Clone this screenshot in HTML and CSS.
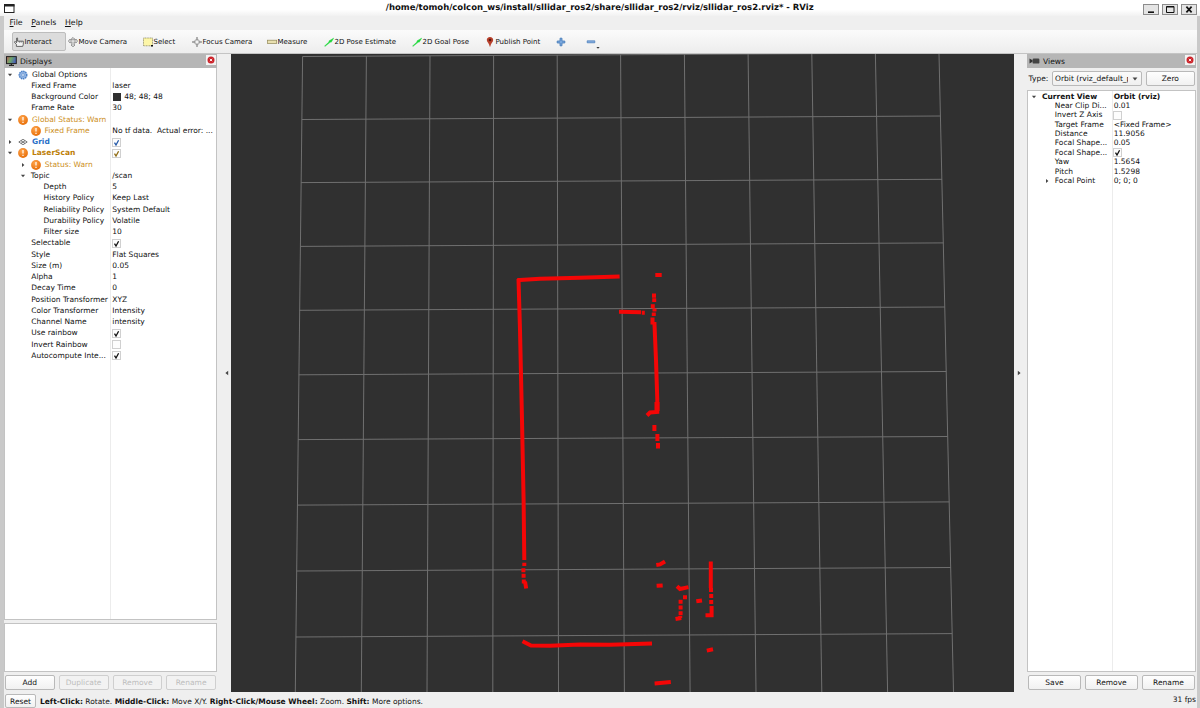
FILE: index.html
```
<!DOCTYPE html>
<html lang="en">
<head>
  <meta charset="UTF-8">
  <title>/home/tomoh/colcon_ws/install/sllidar_ros2/share/sllidar_ros2/rviz/sllidar_ros2.rviz* - RViz</title>
  <link rel="stylesheet" href="styles.css">
</head>
<body>
  <!-- shared icons -->
  <svg class="defs">
    <defs>
      <radialGradient id="orange" cx="40%" cy="30%" r="70%">
        <stop offset="0" stop-color="#ffa54d"/>
        <stop offset="1" stop-color="#e8700a"/>
      </radialGradient>
      <linearGradient id="screen" x1="0" y1="0" x2="1" y2="0.3">
        <stop offset="0" stop-color="#b85c5c"/>
        <stop offset="0.5" stop-color="#6fa96a"/>
        <stop offset="1" stop-color="#4b62b5"/>
      </linearGradient>
    </defs>
    <symbol id="warn" viewBox="0 0 10 10">
      <circle cx="5" cy="5" r="4.9" fill="url(#orange)"/>
      <path d="M5 2v3.6M5 6.7v1.3" stroke="#fff" stroke-width="1.2"/>
    </symbol>
    <symbol id="open" viewBox="0 0 6 6"><path d="M0.9 1.8h4.2L3 4.3z" fill="#444"/></symbol>
    <symbol id="shut" viewBox="0 0 6 6"><path d="M2 0.9v4.2L4.4 3z" fill="#444"/></symbol>
    <symbol id="tick" viewBox="0 0 8 8"><path d="M1.5 3.7L3 6L5.6 1.3" fill="none" stroke="currentColor" stroke-width="1.3"/></symbol>
    <symbol id="arrow" viewBox="0 0 10 10"><path d="M0.6 9L5.2 4.8L4.8 4.1L9.6 1.2L7.2 5.2L6.4 5.1L1.1 9.3z" fill="#1fd83a" stroke="#1fd83a" stroke-width="0.5"/></symbol>
    <symbol id="close" viewBox="0 0 10 10">
      <circle cx="5" cy="5" r="3.5" fill="#cc2229"/>
      <path d="M3.8 3.8l2.4 2.4M6.2 3.8L3.8 6.2" stroke="#fff" stroke-width="0.9"/>
    </symbol>
  </svg>

  <header class="titlebar">
    <svg class="app-icon" viewBox="0 0 11 9"><rect x="0.5" y="0.5" width="9.5" height="8" fill="#fff" stroke="#222"/><path d="M0 1.5h10.5" stroke="#222" stroke-width="2"/></svg>
    <h1>/home/tomoh/colcon_ws/install/sllidar_ros2/share/sllidar_ros2/rviz/sllidar_ros2.rviz* - RViz</h1>
    <div class="win-buttons">
      <span><svg viewBox="0 0 16 11"><path d="M5 8.2h6" stroke="#111" stroke-width="1.6"/></svg></span>
      <span><svg viewBox="0 0 16 11"><path d="M4.5 2.5h7.5v6h-7.5zM4.5 3h7.5" fill="none" stroke="#111"/></svg></span>
      <span><svg viewBox="0 0 16 11"><path d="M5.4 2.7l5.2 5.6M10.6 2.7L5.4 8.3" stroke="#111" stroke-width="1.7"/></svg></span>
    </div>
  </header>

  <div class="window">
    <nav class="menubar">
      <span><u>F</u>ile</span>
      <span><u>P</u>anels</span>
      <span><u>H</u>elp</span>
    </nav>

    <div class="toolbar">
      <div class="tool interact active">
        <svg viewBox="0 0 10 10"><path d="M2.4 9.4V7.3L0.7 5.6V4.7H1.6L2.6 5.7V1.1Q3.1 0.4 3.6 1.1V4.2H9.3V7.3L8.7 9.4z" fill="#f4f4f4" stroke="#444" stroke-width="0.8"/><path d="M5.4 4.2v1.6M7.2 4.2v1.6" stroke="#555" stroke-width="0.6"/></svg>Interact
      </div>
      <div class="tool move">
        <svg viewBox="0 0 10 10"><path d="M5 0.4L6.8 2.2H5.8V3H7.8V2L9.7 4.2L7.8 6V5H6.2V8H7L5 9.8L3 8H3.8V5H2.2V6L0.3 4.2L2.2 2V3H4.2V2.2H3.2z" fill="#ddd" stroke="#777" stroke-width="0.7"/></svg>Move Camera
      </div>
      <div class="tool select">
        <svg viewBox="0 0 10 10"><rect x="0.5" y="1" width="9" height="7.8" fill="#fdf6a8" stroke="#77744c" stroke-width="0.7" stroke-dasharray="1 0.6"/><path d="M8 8.1h2v1.3h-2z" fill="#111"/></svg>Select
      </div>
      <div class="tool focus">
        <svg viewBox="0 0 10 10"><circle cx="5" cy="5" r="2.5" fill="none" stroke="#8b8b8b" stroke-width="0.8"/><path d="M5 0v3.6M5 6.4V10M0 5h3.6M6.4 5H10" stroke="#888"/><path d="M5 0l1.2 1.6H3.8zM5 10l1.2-1.6H3.8zM0 5l1.6-1.2v2.4zM10 5L8.4 3.8v2.4z" fill="#999"/></svg>Focus Camera
      </div>
      <div class="tool measure">
        <svg viewBox="0 0 10 10"><rect x="0.3" y="3.2" width="9.4" height="3.2" fill="#e9e0b0" stroke="#8f8555" stroke-width="0.7"/></svg>Measure
      </div>
      <div class="tool pose"><svg><use href="#arrow"/></svg>2D Pose Estimate</div>
      <div class="tool goal"><svg><use href="#arrow"/></svg>2D Goal Pose</div>
      <div class="tool publish">
        <svg viewBox="0 0 10 10"><path d="M5 0.1C3 0.1 1.8 1.5 1.8 3.1C1.8 5 4.2 6.6 4.8 9.8H5.2C5.8 6.6 8.2 5 8.2 3.1C8.2 1.5 7 0.1 5 0.1z" fill="#b8412c"/><circle cx="5" cy="3" r="1.3" fill="#5d160d"/></svg>Publish Point
      </div>
      <div class="tool plus"><svg viewBox="0 0 10 10"><path d="M4 1.2h2V4h2.8v2H6v2.8H4V6H1.2V4H4z" fill="#7ba7dc" stroke="#4378b8" stroke-width="0.8"/></svg></div>
      <div class="tool minus"><svg viewBox="0 0 10 10"><path d="M1.2 3.8h7.6v2H1.2z" fill="#86aee0" stroke="#4378b8" stroke-width="0.7"/></svg><svg class="drop" viewBox="0 0 6 6"><path d="M1.4 2h3.2L3 3.7z" fill="#333"/></svg></div>
    </div>

    <main class="main">
      <section class="dock displays">
        <div class="dock-title">
          <svg class="dock-icon" viewBox="0 0 11 10"><rect x="0.5" y="0.6" width="9.8" height="7" fill="url(#screen)" stroke="#222"/><path d="M3 9.3h5M5.4 7.6v1.6" stroke="#222" stroke-width="1.2"/></svg>
          Displays
          <span class="dock-close"><svg><use href="#close"/></svg></span>
        </div>
        <div class="tree">
          <div class="row d0"><div class="name"><svg class="tw"><use href="#open"/></svg><svg class="ic" viewBox="0 0 10 10"><circle cx="5" cy="5" r="3.8" fill="#8eb2e2" stroke="#4a7fc5" stroke-width="1.4" stroke-dasharray="1.5 0.7"/><circle cx="5" cy="5" r="1.3" fill="#e4eefa" stroke="#4a7fc5" stroke-width="0.5"/></svg>Global Options</div></div>
          <div class="row d1"><div class="name">Fixed Frame</div><div class="value">laser</div></div>
          <div class="row d1"><div class="name">Background Color</div><div class="value"><i class="swatch"></i>48; 48; 48</div></div>
          <div class="row d1"><div class="name">Frame Rate</div><div class="value">30</div></div>
          <div class="row d0"><div class="name warn"><svg class="tw"><use href="#open"/></svg><svg class="ic"><use href="#warn"/></svg>Global Status: Warn</div></div>
          <div class="row d1i"><div class="name warn"><svg class="ic"><use href="#warn"/></svg>Fixed Frame</div><div class="value">No tf data.&nbsp; Actual error: ...</div></div>
          <div class="row d0"><div class="name grid"><svg class="tw"><use href="#shut"/></svg><svg class="ic" viewBox="0 0 10 10"><path d="M0.8 5L5 2.3L9.2 5L5 7.7zM2.9 3.7L7.1 6.4M7.1 3.7L2.9 6.4" fill="none" stroke="#555" stroke-width="0.8"/></svg>Grid</div><div class="value"><span class="check blue"><svg><use href="#tick"/></svg></span></div></div>
          <div class="row d0"><div class="name warn bold"><svg class="tw"><use href="#open"/></svg><svg class="ic"><use href="#warn"/></svg>LaserScan</div><div class="value"><span class="check gold"><svg><use href="#tick"/></svg></span></div></div>
          <div class="row d1t"><div class="name warn"><svg class="tw"><use href="#shut"/></svg><svg class="ic"><use href="#warn"/></svg>Status: Warn</div></div>
          <div class="row d1t"><div class="name"><svg class="tw"><use href="#open"/></svg>Topic</div><div class="value">/scan</div></div>
          <div class="row d2"><div class="name">Depth</div><div class="value">5</div></div>
          <div class="row d2"><div class="name">History Policy</div><div class="value">Keep Last</div></div>
          <div class="row d2"><div class="name">Reliability Policy</div><div class="value">System Default</div></div>
          <div class="row d2"><div class="name">Durability Policy</div><div class="value">Volatile</div></div>
          <div class="row d2"><div class="name">Filter size</div><div class="value">10</div></div>
          <div class="row d1"><div class="name">Selectable</div><div class="value"><span class="check"><svg><use href="#tick"/></svg></span></div></div>
          <div class="row d1"><div class="name">Style</div><div class="value">Flat Squares</div></div>
          <div class="row d1"><div class="name">Size (m)</div><div class="value">0.05</div></div>
          <div class="row d1"><div class="name">Alpha</div><div class="value">1</div></div>
          <div class="row d1"><div class="name">Decay Time</div><div class="value">0</div></div>
          <div class="row d1"><div class="name">Position Transformer</div><div class="value">XYZ</div></div>
          <div class="row d1"><div class="name">Color Transformer</div><div class="value">Intensity</div></div>
          <div class="row d1"><div class="name">Channel Name</div><div class="value">intensity</div></div>
          <div class="row d1"><div class="name">Use rainbow</div><div class="value"><span class="check"><svg><use href="#tick"/></svg></span></div></div>
          <div class="row d1"><div class="name">Invert Rainbow</div><div class="value"><span class="check"></span></div></div>
          <div class="row d1"><div class="name">Autocompute Inte...</div><div class="value"><span class="check"><svg><use href="#tick"/></svg></span></div></div>
        </div>
        <div class="help-box"></div>
        <div class="buttons">
          <button>Add</button>
          <button disabled>Duplicate</button>
          <button disabled>Remove</button>
          <button disabled>Rename</button>
        </div>
      </section>

      <div class="splitter left"><svg viewBox="0 0 6 6"><path d="M4.2 0.8v4.4L1.4 3z" fill="#444"/></svg></div>

      <svg class="viewport" viewBox="231 54 783 638">
        <!-- ground grid -->
        <g class="grid-lines">
          <path d="M302.6 56.5L939 53M301.9 119.5L940.6 116M301.1 182.6L942 179.3M300.2 246.4L943.5 242.9M299.5 310.3L944.9 307M298.8 374.8L946.3 371.5M298.1 439.6L947.8 436.5M297.4 505.1L949.3 501.9M296.6 571L950.7 567.5M295.9 637L952.2 633.6"/>
          <path d="M302.6 56.5L295.3 692M366.4 56.1L361.3 692M430 55.8L427 692M493.6 55.5L492.8 692M557.2 55.1L558.5 692M620.6 54.8L624.4 692M684.4 54L690.1 692M748.1 54L756 692M811.8 54L821.8 692M875.4 54L887.6 692M939 54L953.5 692"/>
        </g>
        <!-- laser returns -->
        <g class="scan">
          <path d="M517.2 280H520L540 278.8L580 277.8L619.6 276.5"/>
          <path d="M518.5 279L520 330L522 420L523.6 500L524.3 560"/>
          <path d="M654.4 322L656 360L657.3 400V412L650 412.5L647 415.5"/>
          <path d="M657 402V411" stroke-width="5"/>
          <path d="M619 311.8L641 312.2"/>
          <path d="M522.5 641.2L531 645.5L550 645.8L580 644.4L610 644.7L652 643.4"/>
          <path d="M654.6 683.4L670.8 682"/>
          <path d="M655.3 275H661.7"/>
          <path d="M710.8 561.5V588"/>
          <path d="M656.3 565L660 564.4L665 561.5M656.6 585.8L662.7 585.4M677 586.3L680 589L688.5 587.1M696.3 601.3L702 600.5M705.5 615.3H711.6V606M706.8 650.6L713 649.3M675.5 619L681.3 618"/>
          <g class="dots">
            <path d="M654 293.5v4.3M654.2 298.3v3.8M652.8 304.2v4M654.5 308.5v3M653.8 312.4v3.6M652.5 317.5v7M641.8 312.7h3M654.4 425v6M657.4 434v7M658 443v5.5"/>
            <path d="M524.3 562.7v3.4M523.4 568.2v4M523.6 573.8v4M523.8 579.5v4M525 581.5l1.2 7"/>
            <path d="M711 588v4M711.2 594v4M711.2 600v4M685 595.3v4M680.6 599.8v4M680.6 605.5v4M680.6 611.3v4M680.2 616v2"/>
          </g>
        </g>
      </svg>

      <div class="splitter right"><svg viewBox="0 0 6 6"><path d="M1.8 0.8v4.4L4.6 3z" fill="#444"/></svg></div>

      <section class="dock views">
        <div class="dock-title">
          <svg class="dock-icon" viewBox="0 0 11 10"><path d="M0.5 2.6L3.5 4.2V5.8L0.5 7.4z" fill="#333"/><rect x="3.6" y="2.6" width="6.8" height="5" rx="1.2" fill="#444"/></svg>
          Views
          <span class="dock-close"><svg><use href="#close"/></svg></span>
        </div>
        <div class="type-row">
          <label>Type:</label>
          <div class="combo"><span>Orbit (rviz_default_p</span><svg viewBox="0 0 6 6"><path d="M0.6 1.6h4.8L3 4.5z" fill="#444"/></svg></div>
          <button>Zero</button>
        </div>
        <div class="tree">
          <div class="row v0"><div class="name bold"><svg class="tw"><use href="#open"/></svg>Current View</div><div class="value bold">Orbit (rviz)</div></div>
          <div class="row v1"><div class="name">Near Clip Di...</div><div class="value">0.01</div></div>
          <div class="row v1"><div class="name">Invert Z Axis</div><div class="value"><span class="check"></span></div></div>
          <div class="row v1"><div class="name">Target Frame</div><div class="value">&lt;Fixed Frame&gt;</div></div>
          <div class="row v1"><div class="name">Distance</div><div class="value">11.9056</div></div>
          <div class="row v1"><div class="name">Focal Shape...</div><div class="value">0.05</div></div>
          <div class="row v1"><div class="name">Focal Shape...</div><div class="value"><span class="check"><svg><use href="#tick"/></svg></span></div></div>
          <div class="row v1"><div class="name">Yaw</div><div class="value">1.5654</div></div>
          <div class="row v1"><div class="name">Pitch</div><div class="value">1.5298</div></div>
          <div class="row v1t"><div class="name"><svg class="tw"><use href="#shut"/></svg>Focal Point</div><div class="value">0; 0; 0</div></div>
        </div>
        <div class="buttons">
          <button>Save</button>
          <button>Remove</button>
          <button>Rename</button>
        </div>
      </section>
    </main>

    <footer class="statusbar">
      <button>Reset</button>
      <p><b>Left-Click:</b> Rotate. <b>Middle-Click:</b> Move X/Y. <b>Right-Click/Mouse Wheel:</b> Zoom. <b>Shift:</b> More options.</p>
      <span class="fps">31 fps</span>
    </footer>
  </div>
</body>
</html>
```
FILE: styles.css
```
* {
  box-sizing: border-box;
}
body {
  margin: 0;
  width: 1200px;
  height: 708px;
  overflow: hidden;
  display: flex;
  flex-direction: column;
  font-family: "DejaVu Sans", sans-serif;
  font-size: 7.5px;
  color: #111;
  background: #c9c9c9;
  text-rendering: geometricPrecision;
}
svg {
  display: block;
  flex: none;
}
.defs {
  position: absolute;
  width: 0;
  height: 0;
}

/* title bar */
.titlebar {
  flex: none;
  height: 16px;
  display: flex;
  align-items: center;
  padding: 0 3.5px 0 4px;
  background: linear-gradient(#fff 60%, #f1f1f1);
}
.app-icon {
  width: 11px;
  height: 9px;
  margin-top: 1px;
}
.titlebar h1 {
  flex: 1;
  margin: 0;
  padding-left: 42px;
  text-align: center;
  font-size: 8.5px;
  line-height: 18px;
  color: #111;
}
.win-buttons {
  display: flex;
  gap: 3px;
  padding-top: 2px;
}
.win-buttons span {
  width: 16px;
  height: 11px;
  background: #e4e4e4;
  outline: 1px solid #8c8c8c;
  outline-offset: -1px;
}

.window {
  flex: 1;
  min-height: 0;
  margin: 0 3px 0 4px;
  display: flex;
  flex-direction: column;
  background: #efefef;
}
.menubar {
  flex: none;
  height: 14px;
  display: flex;
  gap: 8.6px;
  padding-left: 5.6px;
  font-size: 7.8px;
  line-height: 14.4px;
}

/* toolbar */
.toolbar {
  flex: none;
  height: 24px;
  display: flex;
  align-items: center;
  padding: 0 0 0 7.5px;
  border-bottom: 1px solid #c4c4c4;
  background: linear-gradient(#fbfbfb, #ededed);
  font-size: 7.03px;
}
.tool {
  display: flex;
  align-items: center;
  height: 19px;
}
.tool svg {
  width: 10px;
  height: 10px;
  margin-right: 1px;
}
.interact { width: 54px; padding-left: 1px; }
.active {
  background: #dcdcdc;
  border: 1px solid #bdbdbd;
  border-radius: 2px;
}
.move { width: 77px; padding-left: 2px; }
.select { width: 49px; }
.focus { width: 75px; }
.measure { width: 57px; }
.pose { width: 88px; }
.goal { width: 73px; }
.publish { width: 71px; }
.plus { width: 30px; }
.tool .drop {
  width: 6px;
  height: 6px;
  margin: 12px 0 0 -2px;
}

/* docks */
.main {
  flex: none;
  height: 638px;
  display: flex;
}
.dock {
  display: flex;
  flex-direction: column;
}
.displays { width: 213px; }
.views { width: 169px; }
.dock-title {
  flex: none;
  height: 14px;
  display: flex;
  align-items: center;
  padding-left: 2px;
  font-size: 7.6px;
  background: #b6b6b6;
}
.dock-icon {
  width: 11px;
  height: 10px;
  margin-right: 3px;
}
.dock-close {
  margin-left: auto;
  width: 10px;
  height: 10px;
  margin-right: 1px;
  margin-bottom: 2px;
  background: #f2f2f2;
}
.dock-close svg {
  width: 10px;
  height: 10px;
}

/* property trees */
.tree {
  background: #fff;
  border: 1px solid #c3c3c3;
  overflow: hidden;
}
.displays .tree {
  height: 552px;
  padding-top: 1px;
  border-top: 0;
  background: linear-gradient(#ececec, #ececec) 105px 0 / 1px 100% no-repeat #fff;
}
.row {
  display: flex;
  height: 11.26px;
  line-height: 12px;
  white-space: nowrap;
}
.name {
  display: flex;
  align-items: center;
  flex: none;
  width: 107.3px;
}
.value {
  display: flex;
  align-items: center;
}
.tw {
  width: 6px;
  height: 6px;
  margin-right: 4px;
}
.ic {
  width: 10px;
  height: 10px;
  margin-right: 4px;
}
.d0 .name { padding-left: 2.4px; }
.d0 .ic { margin-left: 0.6px; }
.d1 .name { padding-left: 26.3px; }
.d1i .name { padding-left: 25.5px; }
.d1t .name { padding-left: 14.6px; }
.d1t .tw { margin-right: 5.2px; }
.d2 .name { padding-left: 38.6px; }
.warn { color: #cd8f23; }
.warn.bold { color: #bd7e06; }
.bold { font-weight: bold; }
.grid {
  color: #2b71c8;
  font-weight: bold;
}
.swatch {
  width: 8px;
  height: 8px;
  margin: 0 3px 0 1px;
  background: #303030;
}
.check {
  width: 9px;
  height: 9px;
  margin-left: -0.3px;
  border: 1px solid #d0d0d0;
  color: #111;
  background: #fdfdfd;
}
.check svg {
  width: 8px;
  height: 8px;
}
.check.blue { color: #2459a8; }
.check.gold { color: #8f6b12; }

.help-box {
  height: 49px;
  margin-top: 3px;
  border: 1px solid #c3c3c3;
  background: #fff;
}
.buttons {
  display: flex;
  gap: 4px;
  padding: 3px 1px 0;
}
button {
  flex: 1;
  height: 15px;
  padding: 0;
  border: 1px solid #b9b9b9;
  border-radius: 2px;
  background: linear-gradient(#fefefe, #f1f1f1);
  font: inherit;
  color: #111;
}
button:disabled {
  color: #bdbdbd;
  border-color: #cfcfcf;
  background: #f2f2f2;
}

.splitter {
  display: flex;
  align-items: center;
}
.splitter svg {
  width: 6px;
  height: 6px;
}
.splitter.left {
  width: 14px;
  padding-left: 7px;
}
.splitter.right {
  width: 13px;
  padding-left: 2px;
}

/* 3D view */
.viewport {
  width: 783px;
  height: 638px;
  background: #303030;
}
.grid-lines {
  fill: none;
  stroke: #707070;
  stroke-width: 1;
}
.scan {
  fill: none;
  stroke: #f40606;
  stroke-width: 4;
}

/* views panel */
.type-row {
  display: flex;
  align-items: center;
  height: 22px;
  padding: 0 1px 0 1.6px;
}
.type-row label {
  width: 23px;
}
.type-row label,
.type-row button,
.combo {
  margin-bottom: 1px;
}
.combo {
  width: 90px;
  height: 15px;
  display: flex;
  align-items: center;
  padding: 0 3px 0 2.5px;
  margin-right: 4px;
  border: 1px solid #b9b9b9;
  border-radius: 2px;
  background: linear-gradient(#fbfbfb, #efefef);
}
.combo span {
  flex: none;
  width: 73px;
  overflow: hidden;
  white-space: nowrap;
}
.combo svg {
  width: 6px;
  height: 6px;
  margin-left: auto;
}
.views .tree {
  height: 582px;
  padding-top: 1px;
  background: linear-gradient(#ececec, #ececec) 84px 0 / 1px 100% no-repeat #fff;
}
.views .row {
  height: 9.37px;
  line-height: 10px;
}
.views .name { width: 85.7px; }
.views .v0 .name { padding-left: 3px; }
.views .v0 .tw { margin-right: 5px; }
.v1 .name { padding-left: 26.8px; }
.v1t .name { padding-left: 15.8px; }
.v1t .tw { margin-right: 5px; }

/* status bar */
.statusbar {
  flex: 1;
  display: flex;
  align-items: center;
  padding: 2px 0 0 1px;
}
.statusbar button {
  flex: none;
  width: 31px;
  height: 14px;
}
.statusbar p {
  margin: 0 0 0 4px;
}
.fps {
  margin: -4px 0 0 auto;
  padding-right: 1px;
}
```
